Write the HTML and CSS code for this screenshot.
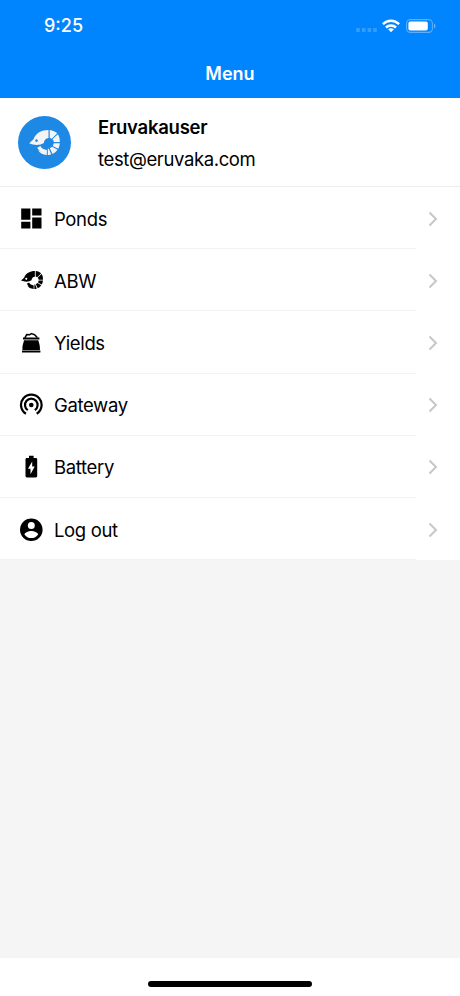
FILE: index.html
```html
<!DOCTYPE html>
<html lang="en">
<head>
    <meta charset="UTF-8">
    <meta name="viewport" content="width=device-width, initial-scale=1.0">
    <title>Menu</title>
    <link rel="stylesheet" href="styles.css">
</head>
<body>
    <svg class="sprite">
        <symbol id="shrimp" viewBox="0 0 92 75">
            <path fill-rule="evenodd" d="M0 40 L13 28 C20 9 37 0 58 0 V24 C50 25 45 30 44 39 C34 46 16 47 0 40 Z M22 28 a4 4 0 1 0 .1 0 Z"/>
            <path d="M61.5 0 C71 1 79 5 84 10 L68 26 L61.5 23 Z"/>
            <path d="M86 12.5 C90 18 92 25 92 36 L74 36 C73 32 72 30 70 28 Z"/>
            <path d="M74 39.5 H92 C91 46 90 51 87 56 L71 48 Z"/>
            <path d="M69 50.5 L85 59 C80 66 75 69 70 72 L62 55 Z"/>
            <path d="M59 56 L66 73 C63 75 60 75 56 75 V56 Z"/>
            <path d="M24 53 L34 48 C37 56 44 59 53 60 V75 C40 75 31 69 27 61 L40 66 C33 63 28 60 24 53 Z"/>
        </symbol>
        <symbol id="chevron" viewBox="0 0 10 16">
            <path d="M1.5 1.5 L8 8 L1.5 14.5" fill="none" stroke="#c7c7cc" stroke-width="2"/>
        </symbol>
    </svg>

    <header class="header">
        <div class="status-bar">
            <span class="time">9:25</span>
            <div class="status-icons">
                <svg class="signal" viewBox="0 0 22 4"><path d="M.2 0h3.6v4H.2zM5.9 0h3.6v4H5.9zM11.6 0h3.6v4h-3.6zM17.2 0h3.6v4h-3.6z"/></svg>
                <svg class="wifi" viewBox="0 0 18 14">
                    <g fill="none" stroke="#fff" stroke-width="2.5">
                        <path d="M.9 5.2 C5.5.6 12.5.6 17.1 5.2"/>
                        <path d="M4 8.5 C6.8 5.7 11.2 5.7 14 8.5"/>
                    </g>
                    <path fill="#fff" d="M9 13.2 L6.1 10.3 C7.8 8.9 10.2 8.9 11.9 10.3 Z"/>
                </svg>
                <svg class="battery" viewBox="0 0 30 14">
                    <rect x=".6" y=".6" width="25.8" height="12.8" rx="3.8" fill="none" stroke="#59b0ff" stroke-width="1.1"/>
                    <rect x="2.4" y="2.4" width="19.4" height="9.2" rx="2" fill="#fff"/>
                    <path d="M28 4.5 C30 5.5 30 8.5 28 9.5 Z" fill="#66b6ff"/>
                </svg>
            </div>
        </div>
        <h1 class="title">Menu</h1>
    </header>

    <section class="profile">
        <div class="avatar"><svg><use href="#shrimp"/></svg></div>
        <div class="profile-info">
            <div class="profile-name">Eruvakauser</div>
            <div class="profile-email">test@eruvaka.com</div>
        </div>
    </section>

    <ul class="menu">
        <li class="menu-item">
            <svg class="icon" viewBox="0 0 24 24"><path d="M2.2 1.6h9.2v11.1H2.2zM13.2 1.6h9.3v6.8h-9.3zM2.2 14.7h9.2v6.9H2.2zM13.2 10.4h9.3v11.2h-9.3z"/></svg>
            <span class="label">Ponds</span>
            <svg class="chevron"><use href="#chevron"/></svg>
        </li>
        <li class="menu-item">
            <svg class="icon shrimp-icon"><use href="#shrimp"/></svg>
            <span class="label">ABW</span>
            <svg class="chevron"><use href="#chevron"/></svg>
        </li>
        <li class="menu-item">
            <svg class="icon" viewBox="0 0 24 24">
                <path d="M5.8 6.8 L7.8 3.5 L10.4 3.8 L12.4 2.6 L15.6 3.7 L18.3 6.6" fill="none" stroke="#000" stroke-width="1.5" stroke-linejoin="round"/>
                <path d="M4 6.4h16.4v2.2H4zM5 9.2h14.4C19.6 11.5 21.3 13.5 20.9 19H3.5C3.1 13.5 4.8 11.5 5 9.2zM3 19.5h18.4v1.9H3z"/>
            </svg>
            <span class="label">Yields</span>
            <svg class="chevron"><use href="#chevron"/></svg>
        </li>
        <li class="menu-item">
            <svg class="icon" viewBox="0 0 24 24">
                <g fill="none" stroke="#000" stroke-width="2.2">
                    <path d="M6.9 20.7 A10.3 10.3 0 1 1 17.7 20.7"/>
                    <path d="M8.8 17.2 A6.3 6.3 0 1 1 15.8 17.2"/>
                </g>
                <circle cx="12.3" cy="12" r="2.3"/>
            </svg>
            <span class="label">Gateway</span>
            <svg class="chevron"><use href="#chevron"/></svg>
        </li>
        <li class="menu-item">
            <svg class="icon" viewBox="0 0 24 24"><path fill-rule="evenodd" d="M10 .8h4.6v2.1h2.2c.8 0 1.4.6 1.4 1.4v16.8c0 .8-.6 1.4-1.4 1.4H7.9c-.8 0-1.4-.6-1.4-1.4V4.3c0-.8.6-1.4 1.4-1.4H10zM13.2 6.5L9 13.8h2.5v5.4l4.2-7.7h-2.5z"/></svg>
            <span class="label">Battery</span>
            <svg class="chevron"><use href="#chevron"/></svg>
        </li>
        <li class="menu-item">
            <svg class="icon" viewBox="-.3 0 24 24"><path fill-rule="evenodd" d="M12 .5a11.3 11.3 0 1 0 0 22.6A11.3 11.3 0 0 0 12 .5zm0 3.4a3.5 3.5 0 1 1 0 7 3.5 3.5 0 0 1 0-7zm0 16.2c-2.8 0-5.3-1.5-6.8-3.7 0-2.2 4.6-3.5 6.8-3.5s6.8 1.3 6.8 3.5c-1.5 2.2-4 3.7-6.8 3.7z"/></svg>
            <span class="label">Log out</span>
            <svg class="chevron"><use href="#chevron"/></svg>
        </li>
    </ul>

    <footer class="footer">
        <div class="home-indicator"></div>
    </footer>
</body>
</html>
```
FILE: styles.css
```css
* {
    box-sizing: border-box;
}

body {
    display: flex;
    flex-direction: column;
    height: 996px;
    margin: 0;
    background-color: #f5f5f5;
    color: #000;
    font-family: 'Inter', sans-serif;
    font-size: 18.5px;
    overflow: hidden;
}

svg {
    display: block;
}

.sprite {
    display: none;
}

.header {
    height: 98px;
    background-color: #0085ff;
    color: #fff;
}

.status-bar {
    display: flex;
    justify-content: space-between;
    align-items: center;
    height: 51px;
    padding: 0 24px 0 44px;
}

.time {
    font-size: 18px;
    font-weight: 500;
}

.status-icons {
    display: flex;
    align-items: center;
}

.signal {
    width: 22px;
    height: 4px;
    margin: 9px 4px 0 0;
    fill: #339dff;
}

.wifi {
    width: 18px;
    height: 14px;
    margin-right: 6px;
}

.battery {
    width: 30px;
    height: 14px;
}

.title {
    margin: 0;
    font-size: 18px;
    font-weight: 600;
    line-height: 46px;
    text-align: center;
}

.profile {
    display: flex;
    align-items: center;
    height: 89px;
    padding-left: 18px;
    background-color: #fff;
    border-bottom: 1px solid #ececec;
}

.avatar {
    display: flex;
    justify-content: center;
    align-items: center;
    width: 53px;
    height: 53px;
    margin-right: 27px;
    border-radius: 50%;
    background-color: #1e88e5;
}

.avatar svg {
    width: 31px;
    height: 25px;
    fill: #f4f4f4;
}

.profile-info {
    padding-top: 2px;
    line-height: 32px;
}

.profile-name {
    font-weight: 600;
    letter-spacing: -0.25px;
}

.profile-email {
    letter-spacing: -0.38px;
}

.menu {
    flex: 1;
    margin: 0;
    padding: 0;
    list-style: none;
}

.menu-item {
    display: flex;
    align-items: center;
    height: 62.2px;
    padding: 1px 22px 0 19px;
    background: linear-gradient(#f3f3f3, #f3f3f3) left bottom / 416px 1px no-repeat #fff;
}

.icon {
    width: 24px;
    height: 24px;
    margin-right: 11px;
}

.shrimp-icon {
    width: 22px;
    height: 18px;
    margin: 0 11px 1px 2px;
}

.label {
    flex: 1;
    letter-spacing: -0.35px;
}

.chevron {
    width: 10px;
    height: 16px;
}

.footer {
    display: flex;
    justify-content: center;
    height: 38px;
    padding-top: 23px;
    background-color: #fff;
}

.home-indicator {
    width: 164px;
    height: 6px;
    border-radius: 3px;
    background-color: #000;
}
```
